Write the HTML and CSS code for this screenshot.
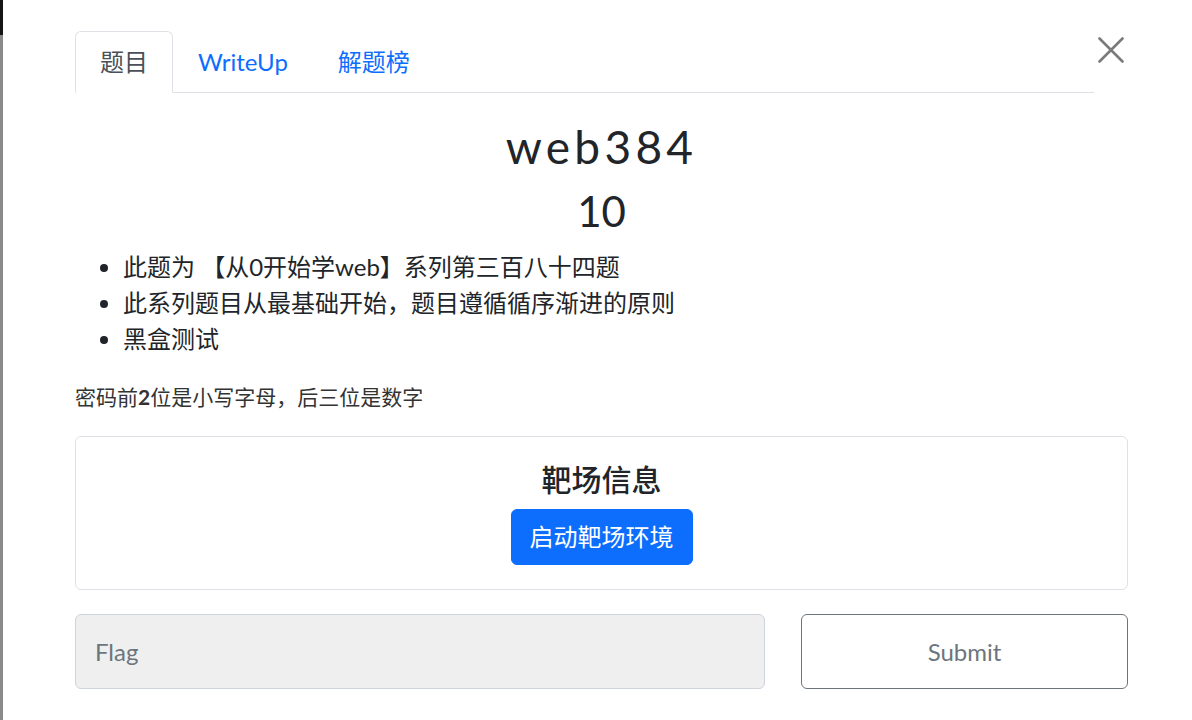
FILE: index.html
```html
<!DOCTYPE html>
<html lang="zh">
<head>
<meta charset="utf-8">
<title>web384</title>
<link rel="stylesheet" href="styles.css">
</head>
<body>
<div class="page">
  <div class="edge"></div>
  <div class="modal">
    <div class="header">
      <ul class="tabs">
        <li class="tab active">题目</li>
        <li class="tab">WriteUp</li>
        <li class="tab">解题榜</li>
      </ul>
      <button class="close" aria-label="Close">
        <svg viewBox="0 0 26 26" width="26" height="26"><path d="M1.5 1.5L24.5 24.5M24.5 1.5L1.5 24.5" stroke="#7a7a7a" stroke-width="2.6" stroke-linecap="round" fill="none"/></svg>
      </button>
    </div>
    <h1 class="title">web384</h1>
    <h2 class="score">10</h2>
    <ul class="desc">
      <li>此题为 【从0开始学web】系列第三百八十四题</li>
      <li>此系列题目从最基础开始，题目遵循循序渐进的原则</li>
      <li>黑盒测试</li>
    </ul>
    <p class="hint">密码前<b>2</b>位是小写字母，后三位是数字</p>
    <div class="card">
      <h5 class="card-title">靶场信息</h5>
      <button class="btn-primary">启动靶场环境</button>
    </div>
    <div class="flag-row">
      <input class="flag-input" type="text" placeholder="Flag">
      <button class="btn-submit">Submit</button>
    </div>
  </div>
</div>
</body>
</html>
```
FILE: styles.css
```css
* { box-sizing: border-box; }
html, body { margin: 0; padding: 0; background: #fff; }
body {
  font-family: Lato, "Noto Sans CJK SC", sans-serif;
  color: #212529;
  font-size: 24px;
  line-height: 1.5;
}
.page {
  display: flex;
  height: 720px;
  overflow: hidden;
}
.edge {
  width: 3px;
  flex: none;
  background: linear-gradient(to bottom, #151515 0, #151515 35px, #8a8a8a 35px, #8a8a8a 100%);
}
.modal {
  flex: 1;
  padding: 31px 64px 0 72px;
}
.header {
  display: flex;
  align-items: flex-start;
}
.tabs {
  flex: 1;
  display: flex;
  list-style: none;
  margin: 0;
  padding: 0;
  border-bottom: 1px solid #dee2e6;
}
.tab {
  padding: 12px 24px;
  margin-bottom: -1px;
  border: 1px solid transparent;
  border-top-left-radius: 6px;
  border-top-right-radius: 6px;
  color: #0d6efd;
  line-height: 36px;
}
.tab.active {
  color: #495057;
  border-color: #dee2e6 #dee2e6 #fff;
  background: #fff;
}
.close {
  width: 34px;
  height: 36px;
  margin-top: 1px;
  padding: 0;
  border: 0;
  background: transparent;
  display: flex;
  align-items: center;
  justify-content: center;
}
.close svg { display: block; }
.title {
  margin: 26px 0 12px;
  text-align: center;
  font-size: 46px;
  font-weight: 400;
  line-height: 1.2;
  letter-spacing: 4.3px;
}
.score {
  margin: 0 0 12px;
  text-align: center;
  font-size: 42px;
  font-weight: 400;
  line-height: 1.2;
}
.desc {
  margin: 0 0 24px;
  padding-left: 48px;
  line-height: 36px;
}
.hint {
  margin: 0 0 24px;
  font-size: 21px;
  line-height: 1.5;
  color: #333;
}
.hint b { font-weight: 700; }
.card {
  border: 1px solid #dee2e6;
  border-radius: 6px;
  padding: 24px;
  display: flex;
  flex-direction: column;
  align-items: center;
}
.card-title {
  margin: 0 0 12px;
  font-size: 30px;
  font-weight: 500;
  line-height: 36px;
}
.btn-primary {
  font-family: inherit;
  font-size: 24px;
  line-height: 36px;
  padding: 9px 18px;
  color: #fff;
  background: #0d6efd;
  border: 1px solid #0d6efd;
  border-radius: 6px;
}
.flag-row {
  margin-top: 24px;
  display: grid;
  grid-template-columns: calc((100% + 36px) * 8 / 12 - 36px) 1fr;
  gap: 36px;
}
.flag-input {
  height: 75px;
  font-family: inherit;
  font-size: 24px;
  padding: 0 19px;
  color: #212529;
  background: #efefef;
  border: 1px solid #ced4da;
  border-radius: 6px;
  outline: none;
}
.flag-input::placeholder { color: #6c757d; opacity: 1; }
.btn-submit {
  height: 75px;
  font-family: inherit;
  font-size: 24px;
  color: #6c757d;
  background: #fff;
  border: 1px solid #6c757d;
  border-radius: 6px;
}
```
